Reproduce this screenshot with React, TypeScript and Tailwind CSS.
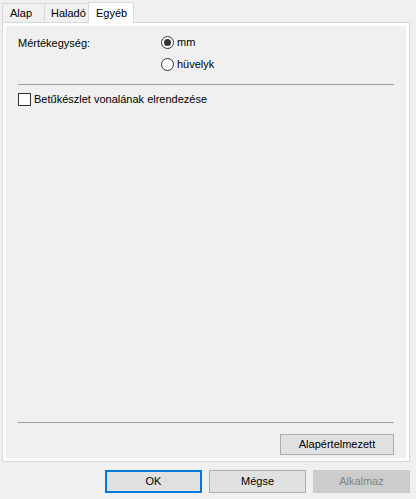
import React from 'react';

function Radio({ checked, label }: { checked?: boolean; label: string }) {
  return (
    <div className="flex items-center h-[13px] gap-[3px]">
      <span className="w-[13px] h-[13px] rounded-full border border-[#333333] bg-white flex items-center justify-center">
        {checked && <span className="w-[7px] h-[7px] rounded-full bg-[#333333]" />}
      </span>
      <span>{label}</span>
    </div>
  );
}

function Button({ label, primary, disabled, className = '' }: { label: string; primary?: boolean; disabled?: boolean; className?: string }) {
  const look = disabled
    ? 'bg-[#cccccc] border border-[#cccccc] text-[#838383]'
    : primary
      ? 'bg-[#e1e1e1] border-2 border-[#0078d7] text-black'
      : 'bg-[#e1e1e1] border border-[#adadad] text-black';
  return (
    <button className={`flex items-center justify-center ${look} ${className}`}>{label}</button>
  );
}

export default function App() {
  return (
    <div
      className="w-[416px] h-[499px] bg-[#f0f0f0] text-[11px] leading-[15px] text-black flex flex-col"
      style={{ fontFamily: '"Liberation Sans", Arial, sans-serif' }}
    >
      {/* Tab strip */}
      <div className="flex items-end h-[23px] pl-[2px] relative z-10">
        <div className="w-[43px] h-[19px] border border-[#d9d9d9] border-b-0 bg-[#f0f0f0] flex items-center pl-[7px] mb-[1px]">Alap</div>
        <div className="w-[44px] h-[19px] border border-[#d9d9d9] border-l-0 border-b-0 bg-[#f0f0f0] flex items-center pl-[6px] mb-[1px]">Haladó</div>
        <div className="w-[46px] h-[21px] border border-[#d9d9d9] border-b-0 bg-white flex items-center pl-[7px] -ml-[1px]">Egyéb</div>
      </div>

      {/* Tab panel */}
      <div className="ml-[2px] w-[408px] h-[440px] -mt-[1px] border border-[#d9d9d9] bg-white p-[3px]">
        <div className="w-full h-full bg-[#f0f0f0] flex flex-col px-[12px]">
          <div className="flex mt-[9px]">
            <div className="w-[143px] pt-[1px]">Mértékegység:</div>
            <div className="flex flex-col gap-[9px] pt-[1px]">
              <Radio checked label="mm" />
              <Radio label="hüvelyk" />
            </div>
          </div>
          <div className="mt-[13px] h-px bg-[#a0a0a0]" />
          <div className="mt-[7px] flex items-center gap-[3px]">
            <span className="w-[13px] h-[13px] border border-[#333333] bg-white" />
            <span>Betűkészlet vonalának elrendezése</span>
          </div>
          <div className="flex-1" />
          <div className="h-px bg-[#a0a0a0]" />
          <div className="flex justify-end mt-[11px] mb-[3px]">
            <Button label="Alapértelmezett" className="w-[114px] h-[21px]" />
          </div>
        </div>
      </div>

      {/* Dialog buttons */}
      <div className="flex justify-end gap-[7px] mt-[8px] pr-[6px]">
        <Button primary label="OK" className="w-[97px] h-[23px]" />
        <Button label="Mégse" className="w-[97px] h-[23px]" />
        <Button disabled label="Alkalmaz" className="w-[97px] h-[23px]" />
      </div>
    </div>
  );
}
